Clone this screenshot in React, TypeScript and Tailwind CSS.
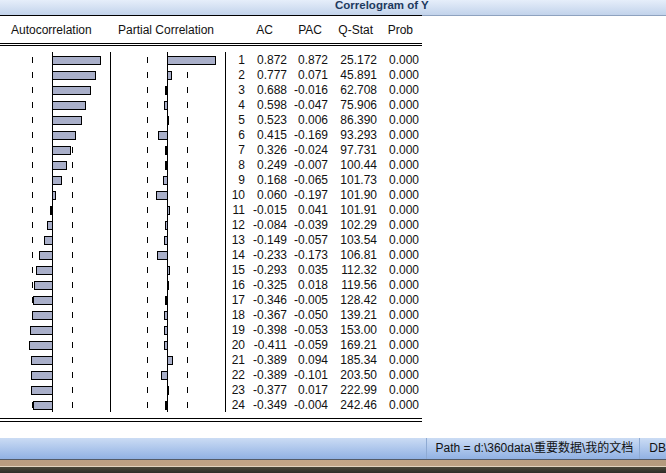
const rows: [number, number, number, string][] = [
  [1, 0.872, 0.872, "25.172"],
  [2, 0.777, 0.071, "45.891"],
  [3, 0.688, -0.016, "62.708"],
  [4, 0.598, -0.047, "75.906"],
  [5, 0.523, 0.006, "86.390"],
  [6, 0.415, -0.169, "93.293"],
  [7, 0.326, -0.024, "97.731"],
  [8, 0.249, -0.007, "100.44"],
  [9, 0.168, -0.065, "101.73"],
  [10, 0.06, -0.197, "101.90"],
  [11, -0.015, 0.041, "101.91"],
  [12, -0.084, -0.039, "102.29"],
  [13, -0.149, -0.057, "103.54"],
  [14, -0.233, -0.173, "106.81"],
  [15, -0.293, 0.035, "112.32"],
  [16, -0.325, 0.018, "119.56"],
  [17, -0.346, -0.005, "128.42"],
  [18, -0.367, -0.05, "139.21"],
  [19, -0.398, -0.053, "153.00"],
  [20, -0.411, -0.059, "169.21"],
  [21, -0.389, 0.094, "185.34"],
  [22, -0.389, -0.101, "203.50"],
  [23, -0.377, 0.017, "222.99"],
  [24, -0.349, -0.004, "242.46"],
];

const SCALE = 55;

function Bar({ axis, v, i }: { axis: number; v: number; i: number }) {
  const y = 4.5 + i * 15;
  const w = Math.round(Math.abs(v) * SCALE);
  if (w < 2) {
    return <rect x={v < 0 ? axis - 2 : axis} y={y - 0.5} width={2} height={9} fill="#000" />;
  }
  return (
    <rect
      x={v < 0 ? axis + 0.5 - w : axis + 0.5}
      y={y}
      width={w}
      height={8}
      fill="#a9afc9"
      stroke="#000"
      strokeWidth={1}
    />
  );
}

function Chart() {
  return (
    <svg width="226" height="360" className="shrink-0 block">
      {[52.5, 110.5, 167.5, 225.5].map((x) => (
        <line key={x} x1={x} x2={x} y1={0} y2={360} stroke="#000" strokeWidth={1} />
      ))}
      {rows.map((r, i) =>
        [32.5, 72.5, 147.5, 187.5].map((x) => (
          <line key={`${i}-${x}`} x1={x} x2={x} y1={5 + i * 15} y2={11 + i * 15} stroke="#000" strokeWidth={1} />
        ))
      )}
      {rows.map((r, i) => (
        <g key={i}>
          <Bar axis={52} v={r[1]} i={i} />
          <Bar axis={167} v={r[2]} i={i} />
        </g>
      ))}
    </svg>
  );
}

export default function App() {
  return (
    <div className="w-[666px] h-[473px] overflow-hidden bg-white flex flex-col text-[12px] text-[#111] font-['Liberation_Sans',Arial,'Noto_Sans_CJK_SC',sans-serif]">
      {/* title bar */}
      <div className="h-[15px] shrink-0 bg-gradient-to-b from-[#e6eefa] to-[#c2d3eb] flex items-start pl-[335px]">
        <span className="font-bold text-[11.5px] leading-[11px] text-[#1e3a5e]">Correlogram of Y</span>
      </div>
      <div className="h-[1px] shrink-0 flex">
        <div className="w-[422px] bg-black" />
        <div className="flex-1 bg-[#8ea2bf]" />
      </div>

      {/* header */}
      <div className="w-[422px] h-[27px] shrink-0 flex pt-[7px] leading-[15px]">
        <div className="w-[110px] pl-[11px]">Autocorrelation</div>
        <div className="w-[116px] pl-[8px]">Partial Correlation</div>
        <div className="w-[19px]" />
        <div className="w-[42px] text-right pr-[14px]">AC</div>
        <div className="w-[41px] text-right pr-[6px]">PAC</div>
        <div className="w-[49px] text-right pr-[4px]">Q-Stat</div>
        <div className="w-[42px] text-right pr-[6px]">Prob</div>
      </div>
      <div className="w-[422px] h-[3px] shrink-0 border-t border-b border-black" />

      {/* body */}
      <div className="w-[422px] flex mt-[6px] shrink-0">
        <Chart />
        <div className="flex flex-col pt-[1px] leading-[15px]">
          {rows.map((r) => (
            <div key={r[0]} className="flex h-[15px]">
              <div className="w-[19px] text-right">{r[0]}</div>
              <div className="w-[42px] text-right">{r[1].toFixed(3)}</div>
              <div className="w-[41px] text-right">{r[2].toFixed(3)}</div>
              <div className="w-[49px] text-right">{r[3]}</div>
              <div className="w-[42px] text-right">0.000</div>
            </div>
          ))}
        </div>
      </div>
      <div className="w-[422px] h-[4px] mt-[5px] shrink-0 border-t border-b border-black" />

      <div className="flex-1" />

      {/* status bar */}
      <div className="h-[21px] shrink-0 flex bg-gradient-to-b from-[#cbdcf4] to-[#91b1e3] leading-[15px]">
        <div className="w-[428px]" />
        <div className="w-[216px] border-l border-r border-[#8eaad3] pl-[9px] flex items-center">
          Path = d:\360data\重要数据\我的文档
        </div>
        <div className="flex-1 pl-[9px] flex items-center">DB</div>
      </div>
      <div className="h-[1px] shrink-0 bg-[#545b67]" />
      <div className="h-[6px] shrink-0 bg-gradient-to-r from-[#b99c80] via-[#c4a687] to-[#b59a7e]" />
      <div className="h-[1px] shrink-0 bg-[#e2d3bf]" />
      <div className="h-[6px] shrink-0 bg-gradient-to-b from-[#4a4638] to-[#2e2d28]" />
    </div>
  );
}
